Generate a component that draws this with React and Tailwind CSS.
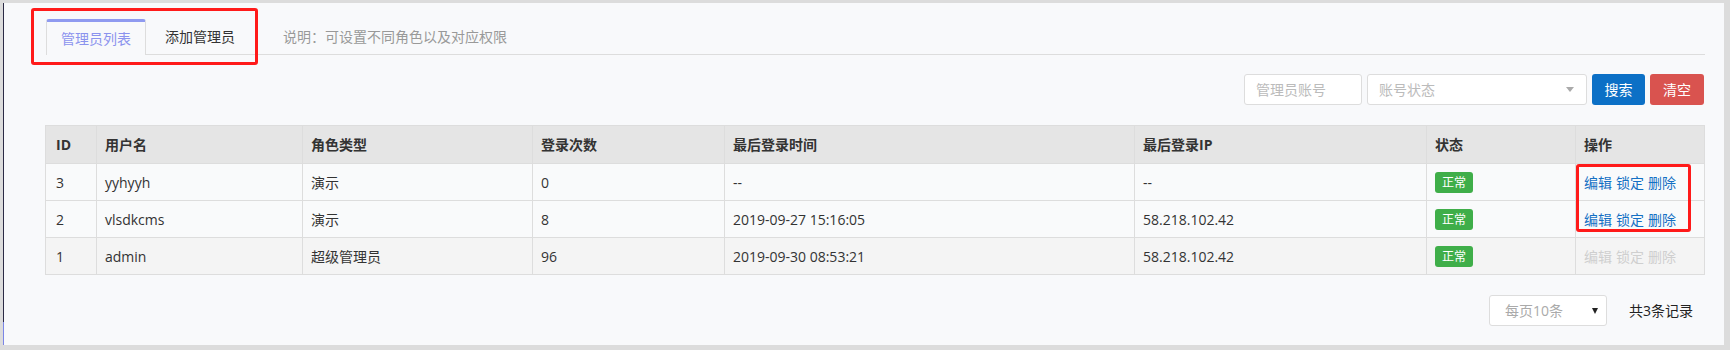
import React from "react";

const cols = [51, 206, 230, 192, 410, 292, 149, 129];
const heads = ["ID", "用户名", "角色类型", "登录次数", "最后登录时间", "最后登录IP", "状态", "操作"];
const rows = [
  { id: "3", name: "yyhyyh", role: "演示", count: "0", time: "--", ip: "--", on: true, bg: "bg-[#f9fafb]" },
  { id: "2", name: "vlsdkcms", role: "演示", count: "8", time: "2019-09-27 15:16:05", ip: "58.218.102.42", on: true, bg: "bg-[#f9fafb]" },
  { id: "1", name: "admin", role: "超级管理员", count: "96", time: "2019-09-30 08:53:21", ip: "58.218.102.42", on: false, bg: "bg-[#f4f4f4]" },
];

function Actions({ on }) {
  const c = on ? "text-[#1570c4]" : "text-[#cfcfcf]";
  return (
    <div className={"flex gap-[4px] " + c}>
      <span>编辑</span>
      <span>锁定</span>
      <span>删除</span>
    </div>
  );
}

export default function App() {
  return (
    <div
      className="relative w-[1730px] h-[350px] bg-[#dcdcdc] pt-[3px] pl-[3px] flex text-[14px] text-[#333]"
      style={{ fontFamily: '"Open Sans", "Noto Sans CJK SC", sans-serif' }}
    >
      <div className="w-px h-[342px] flex flex-col">
        <div className="flex-1 bg-[#2b2b45]"></div>
        <div className="h-[23px] bg-[#7b86e6]"></div>
      </div>
      <div className="w-[1720px] h-[342px] bg-[#f8f9fb] pl-[41px] pr-[20px] pt-[16px]">
        {/* tabs */}
        <div className="ml-[1px] w-[1659px] h-[36px] flex items-end border-b border-[#dddddd]">
          <div className="w-[100px] h-[36px] -mb-px bg-[#f8f9fb] border-x border-[#dddddd] border-t-[3px] border-t-[#8f9af0] rounded-t-[3px] flex items-center justify-center text-[#8b93ee]">
            管理员列表
          </div>
          <div className="h-[35px] px-[19px] flex items-center text-[#333]">添加管理员</div>
          <div className="h-[35px] ml-[29px] flex items-center text-[#999]">说明：可设置不同角色以及对应权限</div>
        </div>

        {/* search */}
        <div className="mt-[19px] flex justify-end gap-[5px] h-[31px]">
          <div className="w-[118px] bg-white border border-[#dddddd] rounded-[3px] pl-[11px] flex items-center text-[#bbb]">管理员账号</div>
          <div className="w-[220px] bg-white border border-[#dddddd] rounded-[3px] pl-[11px] pr-[12px] flex items-center justify-between text-[#bbb]">
            <span>账号状态</span>
            <span className="w-0 h-0 border-x-[4px] border-x-transparent border-t-[5px] border-t-[#aaaaaa]"></span>
          </div>
          <div className="w-[53px] bg-[#0c70c6] rounded-[3px] text-white flex items-center justify-center">搜索</div>
          <div className="w-[54px] bg-[#d9534f] rounded-[3px] text-white flex items-center justify-center">清空</div>
        </div>

        {/* table */}
        <table className="mt-[20px] table-fixed border-collapse w-[1659px]">
          <colgroup>
            {cols.map((w, i) => (
              <col key={i} style={{ width: w }} />
            ))}
          </colgroup>
          <thead>
            <tr className="h-[38px] bg-[#e5e5e5]">
              {heads.map((h, i) => (
                <th key={h} className={"border border-[#dddddd] text-left font-bold " + (i === 0 ? "pl-[10px]" : "pl-[8px]")}>{h}</th>
              ))}
            </tr>
          </thead>
          <tbody>
            {rows.map((r) => (
              <tr key={r.id} className={"h-[37px] " + r.bg}>
                <td className="border border-[#dddddd] pl-[10px]">{r.id}</td>
                <td className="border border-[#dddddd] pl-[8px]">{r.name}</td>
                <td className="border border-[#dddddd] pl-[8px]">{r.role}</td>
                <td className="border border-[#dddddd] pl-[8px]">{r.count}</td>
                <td className="border border-[#dddddd] pl-[8px]">{r.time}</td>
                <td className="border border-[#dddddd] pl-[8px]">{r.ip}</td>
                <td className="border border-[#dddddd] pl-[8px]">
                  <span className="inline-flex w-[38px] h-[21px] items-center justify-center rounded-[3px] bg-[#3fae49] text-white text-[12px]">正常</span>
                </td>
                <td className="border border-[#dddddd] pl-[8px]">
                  <Actions on={r.on} />
                </td>
              </tr>
            ))}
          </tbody>
        </table>

        {/* pagination */}
        <div className="mt-[20px] mr-[11px] flex justify-end items-center gap-[22px]">
          <div className="w-[118px] h-[31px] bg-white border border-[#dddddd] rounded-[3px] pl-[15px] pr-[8px] flex items-center justify-between text-[#aaa]">
            <span>每页10条</span>
            <span className="w-0 h-0 border-x-[3.5px] border-x-transparent border-t-[6px] border-t-[#222]"></span>
          </div>
          <span className="text-[#222]">共3条记录</span>
        </div>
      </div>

      {/* annotation boxes */}
      <div className="absolute left-[31px] top-[8px] w-[227px] h-[57px] border-[3px] border-[#ff1a1a] rounded-[3px]"></div>
      <div className="absolute left-[1576px] top-[164px] w-[115px] h-[68px] border-[3px] border-[#ff1a1a] rounded-[3px]"></div>
    </div>
  );
}
